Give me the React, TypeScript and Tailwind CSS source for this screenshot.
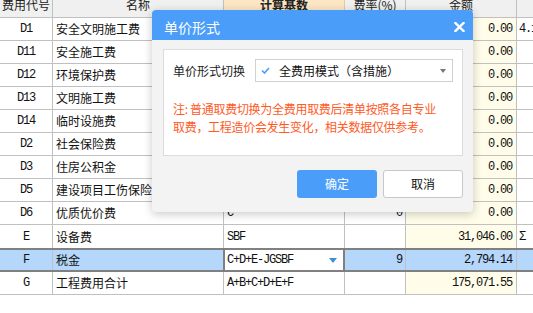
import React from "react";

type Row = { code: string; name: string; base: string; rate: string; amt: string; extra: string };

const rows: Row[] = [
  { code: "D1", name: "安全文明施工费", base: "", rate: "", amt: "0.00", extra: "4.1" },
  { code: "D11", name: "安全施工费", base: "", rate: "", amt: "0.00", extra: "" },
  { code: "D12", name: "环境保护费", base: "", rate: "", amt: "0.00", extra: "" },
  { code: "D13", name: "文明施工费", base: "", rate: "", amt: "0.00", extra: "" },
  { code: "D14", name: "临时设施费", base: "", rate: "", amt: "0.00", extra: "" },
  { code: "D2", name: "社会保险费", base: "", rate: "", amt: "0.00", extra: "" },
  { code: "D3", name: "住房公积金", base: "", rate: "", amt: "0.00", extra: "" },
  { code: "D5", name: "建设项目工伤保险", base: "", rate: "", amt: "0.00", extra: "" },
  { code: "D6", name: "优质优价费", base: "C", rate: "0", amt: "0.00", extra: "" },
  { code: "E", name: "设备费", base: "SBF", rate: "", amt: "31,046.00", extra: "Σ" },
];

const mono = "font-['Liberation_Mono','Noto_Sans_CJK_SC',monospace] text-[12px] tracking-[-1.2px]";
const line = "border-[#c0c0c0]";

function DataRow({ r, last }: { r: Row; last?: boolean }) {
  return (
    <div className={`flex h-[23px] ${last ? "" : "border-b"} ${line} text-[#111]`}>
      <div className={`w-[53px] border-r ${line} flex items-center justify-center ${mono}`}>{r.code}</div>
      <div className={`w-[171px] border-r ${line} flex items-center pl-[3px] text-[12px]`}>{r.name}</div>
      <div className={`w-[121px] border-r ${line} flex items-center pl-[3px] ${mono}`}>{r.base}</div>
      <div className={`w-[61px] border-r ${line} flex items-center justify-end pr-[3px] ${mono}`}>{r.rate}</div>
      <div className={`w-[111px] border-r ${line} bg-[#fffde9] flex items-center justify-end pr-[4px] ${mono}`}>{r.amt}</div>
      <div className={`flex-1 flex items-center pl-[2px] ${mono} whitespace-nowrap overflow-hidden`}>{r.extra}</div>
    </div>
  );
}

export default function App() {
  return (
    <div className="relative w-[533px] h-[313px] overflow-hidden bg-white font-['Noto_Sans_CJK_SC',sans-serif]">
      {/* table */}
      <div className="flex flex-col">
        <div className={`flex h-[18px] border-b ${line} bg-[#f0f0f0] overflow-hidden text-[12px] leading-[12px] text-[#222]`}>
          <div className={`w-[53px] border-r ${line} flex items-end justify-center pb-[6px] whitespace-nowrap`}>费用代号</div>
          <div className={`w-[171px] border-r ${line} flex items-end justify-center pb-[6px]`}>名称</div>
          <div className={`w-[121px] border-r border-[#e8c99a] bg-[#fde6c3] flex items-end justify-center pb-[6px] font-bold`}>计算基数</div>
          <div className={`w-[61px] border-r ${line} flex items-end justify-center pb-[6px]`}>费率(%)</div>
          <div className={`w-[111px] border-r ${line} flex items-end justify-center pb-[6px]`}>金额</div>
          <div className="flex-1" />
        </div>
        {rows.map((r, i) => (
          <DataRow key={r.code} r={r} last={i === rows.length - 1} />
        ))}
        {/* F row */}
        <div className="flex h-[24px] border-y-2 border-[#808080] bg-[#b4d7fb] text-[#111]">
          <div className={`w-[53px] border-r ${line} flex items-center justify-center ${mono}`}>F</div>
          <div className="w-[170px] flex items-center pl-[3px] text-[12px]">税金</div>
          <div className="w-[122px] border-x-2 border-[#808080] bg-white flex items-center justify-between pl-[2px] pr-[6px]">
            <span className={mono}>C+D+E-JGSBF</span>
            <svg width="8" height="5" viewBox="0 0 8 5">
              <path d="M0 0 H8 L4 5 Z" fill="#3d8fd8" />
            </svg>
          </div>
          <div className={`w-[61px] border-r ${line} flex items-center justify-end pr-[3px] ${mono}`}>9</div>
          <div className={`w-[111px] border-r ${line} flex items-center justify-end pr-[4px] ${mono}`}>2,794.14</div>
          <div className="flex-1" />
        </div>
        <DataRow r={{ code: "G", name: "工程费用合计", base: "A+B+C+D+E+F", rate: "", amt: "175,071.55", extra: "" }} />
      </div>

      {/* dialog */}
      <div className="absolute left-[152px] top-[10px] w-[321px] h-[202px] rounded-[4px] bg-[#f3f3f3] shadow-[0_2px_10px_rgba(0,0,0,0.22)] flex flex-col">
        <div className="h-[30px] rounded-t-[4px] bg-[#4a9df8] flex items-center justify-between pl-[12px] pr-[8px] pt-[3px]">
          <span className="text-[14px] text-white leading-none">单价形式</span>
          <svg width="11" height="10" viewBox="0 0 11 10">
            <path d="M1.5 1 L9.5 9 M9.5 1 L1.5 9" stroke="white" strokeWidth="2.4" strokeLinecap="square" />
          </svg>
        </div>
        <div className="flex flex-col px-[11px] pt-[9px]">
          <div className="w-[300px] h-[107px] bg-white border border-[#dcdcdc] px-[9px] pt-[9px]">
            <div className="flex items-center gap-[10px]">
              <span className="text-[12px] text-[#222] whitespace-nowrap">单价形式切换</span>
              <div className="w-[198px] h-[23px] border border-[#d0d0d0] flex items-center pl-[5px] pr-[6px]">
                <svg width="9" height="7" viewBox="0 0 9 7">
                  <path d="M1 3.5 L3.5 6 L8 1" stroke="#4a9df8" strokeWidth="1.6" fill="none" />
                </svg>
                <span className="ml-[9px] text-[12px] text-[#111] whitespace-nowrap">全费用模式（含措施）</span>
                <svg className="ml-auto" width="6" height="4" viewBox="0 0 6 4">
                  <path d="M0 0 H6 L3 4 Z" fill="#777" />
                </svg>
              </div>
            </div>
            <div className="mt-[18px] text-[12px] leading-[18px] text-[#ff5a1f] whitespace-nowrap tracking-[-0.3px]">
              注: 普通取费切换为全费用取费后清单按照各自专业
              <br />
              取费，工程造价会发生变化，相关数据仅供参考。
            </div>
          </div>
          <div className="mt-[14px] flex justify-end gap-[6px] w-[300px]">
            <button className="w-[80px] h-[28px] rounded-[3px] bg-[#4a9ef9] text-white text-[12px]">确定</button>
            <button className="w-[80px] h-[28px] rounded-[3px] bg-white border border-[#c8c8c8] text-[#111] text-[12px]">取消</button>
          </div>
        </div>
      </div>
    </div>
  );
}
